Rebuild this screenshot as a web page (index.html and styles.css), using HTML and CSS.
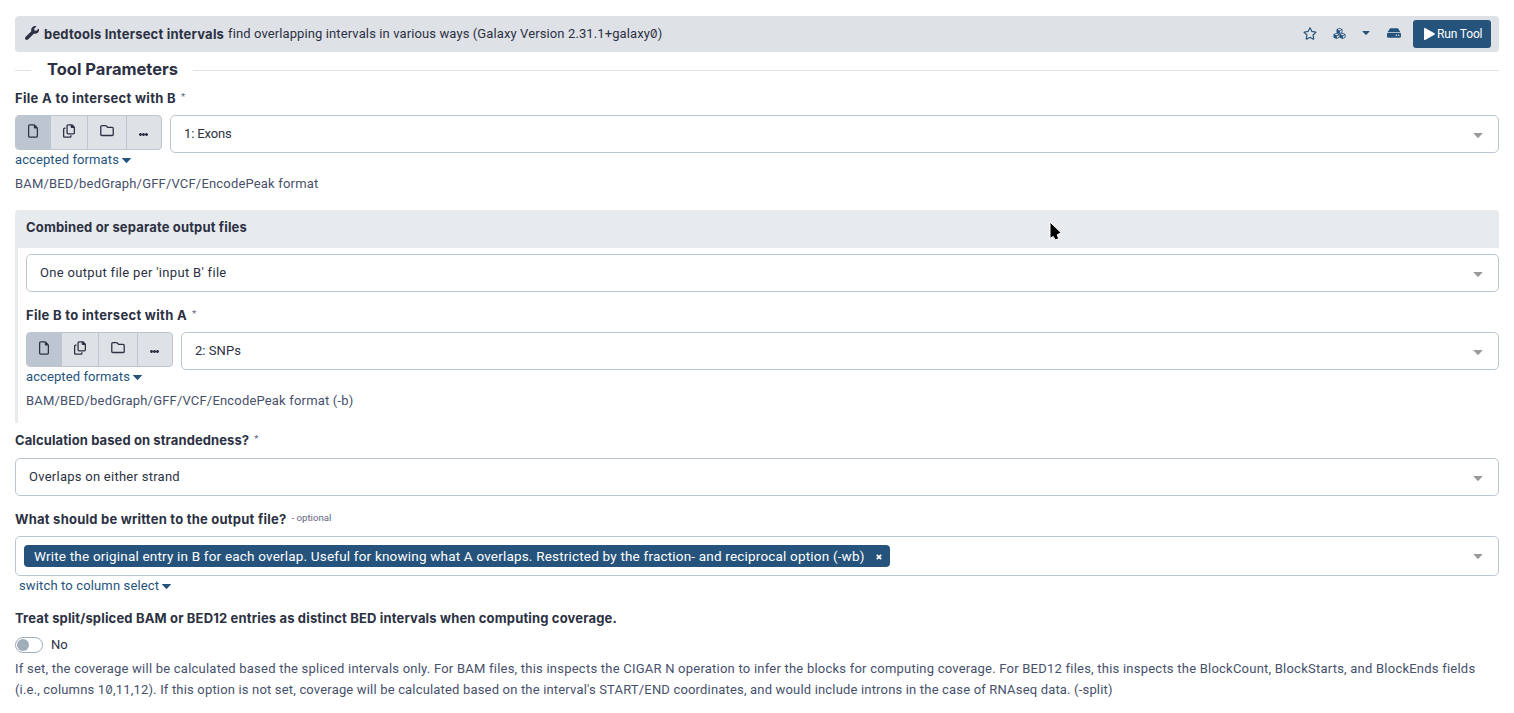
FILE: index.html
```html
<!DOCTYPE html>
<html lang="en">
<head>
<meta charset="utf-8">
<title>bedtools Intersect intervals</title>
<link rel="stylesheet" href="styles.css">
</head>
<body>
<svg class="defs" aria-hidden="true">
  <symbol id="file" viewBox="0 0 384 512"><path d="M320 464c8.800 0 16-7.200 16-16V160h-80c-17.700 0-32-14.300-32-32V48H64c-8.800 0-16 7.200-16 16v384c0 8.800 7.200 16 16 16h256zM0 64C0 28.700 28.700 0 64 0h165.500c17 0 33.300 6.700 45.300 18.700l90.500 90.500c12 12 18.700 28.300 18.700 45.300V448c0 35.300-28.700 64-64 64H64c-35.300 0-64-28.700-64-64z"/></symbol>
  <symbol id="copy" viewBox="0 0 448 512"><path d="M384 336H192c-8.800 0-16-7.200-16-16V64c0-8.800 7.200-16 16-16h96v64c0 17.700 14.300 32 32 32h80v176c0 8.800-7.200 16-16 16zM192 384h192c35.300 0 64-28.700 64-64V125c0-13-5-25-14-34l-77-77c-9-9-21-14-34-14H192c-35.300 0-64 28.700-64 64v256c0 35.300 28.700 64 64 64zM64 128c-35.300 0-64 28.700-64 64v256c0 35.300 28.700 64 64 64h192c35.300 0 64-28.700 64-64v-32h-48v32c0 8.800-7.200 16-16 16H64c-8.800 0-16-7.200-16-16V192c0-8.800 7.200-16 16-16h32v-48z"/></symbol>
  <symbol id="folder" viewBox="0 0 512 448"><path d="M0 64C0 28.700 28.700 0 64 0h132.100c19.100 0 37.400 7.600 50.900 21.100L289.900 64H448c35.300 0 64 28.700 64 64v224c0 35.300-28.700 64-64 64H64c-35.300 0-64-28.700-64-64zm64-16c-8.800 0-16 7.200-16 16v288c0 8.800 7.200 16 16 16h384c8.800 0 16-7.200 16-16V128c0-8.800-7.200-16-16-16H286.600c-10.600 0-20.800-4.200-28.300-11.700L213.100 55c-4.500-4.500-10.600-7-17-7z"/></symbol>
  <symbol id="caret" viewBox="0 0 9 5"><path d="M.3 0h8.400c.3 0 .4.300.2.500L4.900 4.800a.5.500 0 0 1-.8 0L.1.500C-.1.300 0 0 .3 0z"/></symbol>
</svg>
<main class="tool">
  <header class="tool-header">
    <svg class="wrench" viewBox="0 0 512 512"><path d="M507.700 109.100c-2.300-9-13.500-12-20.100-5.400l-74.300 74.300-67.900-11.300-11.300-67.900 74.300-74.300c6.600-6.600 3.500-17.800-5.500-20.200-47.400-11.700-99.600.9-136.600 37.900-39.600 39.600-50.600 97.100-34.100 147.200L18.700 402.800c-25 25-25 65.500 0 90.500s65.500 25 90.500 0l213.200-213.200c50.100 16.700 107.500 5.700 147.400-34.200 37.100-37.100 49.700-89.300 37.900-136.800z"/></svg>
    <h1 class="tool-title"><span class="t-title">bedtools Intersect intervals</span></h1>
    <span class="tool-desc t-desc">find overlapping intervals in various ways (Galaxy Version 2.31.1+galaxy<span class="zero">0</span>)</span>
    <div class="actions">
      <svg class="star" viewBox="0 0 576 512"><path d="M528.100 171.500L382 150.200 316.700 17.800c-11.700-23.600-45.600-23.900-57.400 0L194 150.200 47.900 171.500c-26.200 3.800-36.700 36.100-17.700 54.600l105.700 103-25 145.500c-4.500 26.300 23.200 46 46.400 33.700L288 439.600l130.700 68.700c23.200 12.200 50.900-7.400 46.400-33.700l-25-145.500 105.700-103c19-18.500 8.500-50.800-17.700-54.600zM388.600 312.300l23.700 138.400L288 385.400l-124.300 65.300 23.700-138.400-100.600-98 139-20.200 62.200-126 62.200 126 139 20.200z"/></svg>
      <svg class="cubes" viewBox="0 0 24 22"><g id="cube"><path fill-rule="evenodd" d="M12 0l5.300 2.100q.7.300.7 1v5.800q0 .7-.7 1L12 12 6.700 9.900q-.7-.3-.7-1V3.100q0-.7.700-1zM12 1.600L8 3.200l4 1.600 4-1.600zM12.800 6v4l3.700-1.600V4.500z"/></g><use href="#cube" x="-6" y="9.800"/><use href="#cube" x="6" y="9.800"/></svg>
      <svg class="menu-caret"><use href="#caret"/></svg>
      <svg class="drive" viewBox="0 0 576 384"><path d="M576 240v96c0 26.500-21.500 48-48 48H48c-26.500 0-48-21.500-48-48v-96c0-26.500 21.500-48 48-48h480c26.500 0 48 21.500 48 48zm-48-80c12.300 0 24 2.800 34.400 7.700L462.300 17.400C455.500 6.500 443 0 430 0H146c-13 0-25.500 6.500-32.300 17.400L13.600 167.700C24 162.800 35.700 160 48 160zm-48 96a32 32 0 1 0 0 64 32 32 0 0 0 0-64zm-96 0a32 32 0 1 0 0 64 32 32 0 0 0 0-64z"/></svg>
      <button class="run"><svg class="play" viewBox="0 0 11 12"><path d="M0 .7C0 .1.600-.2 1.100.1l9.300 5.200c.6.300.6 1.100 0 1.400L1.100 11.900c-.5.300-1.100 0-1.100-.6z"/></svg><span class="t-run">Run Tool</span></button>
    </div>
  </header>
  <h2 class="divider"><span class="t-head">Tool Parameters</span></h2>

  <div class="label"><b class="t-filea">File A to intersect with B</b><span class="mark">*</span></div>
  <div class="file-row">
    <div class="source">
      <div class="group">
        <button class="g-file active"><svg class="i-file"><use href="#file"/></svg></button>
        <button class="g-copy"><svg class="i-copy"><use href="#copy"/></svg></button>
        <button class="g-folder"><svg class="i-folder"><use href="#folder"/></svg></button>
        <button class="g-more"><i class="dots"></i></button>
      </div>
      <a class="link"><span class="t-accepted">accepted formats</span><svg class="link-caret"><use href="#caret"/></svg></a>
    </div>
    <div class="select"><span class="t-exons">1: Exons</span><svg class="arrow"><use href="#caret"/></svg></div>
  </div>
  <p class="help"><span class="t-bam">BAM/BED/bedGraph/GFF/VCF/EncodePeak format</span></p>

  <section class="portlet">
    <div class="portlet-header"><b class="t-combined">Combined or separate output files</b>
      <svg class="cursor" viewBox="0 0 13 20"><path d="M1 1v16.500l3.200-2 2.300 3.500 3.200-1.400-1.500-3.800 4-2z"/></svg>
    </div>
    <div class="portlet-body">
      <div class="select"><span class="t-one">One output file per 'input B' file</span><svg class="arrow"><use href="#caret"/></svg></div>
      <div class="label label-b"><b class="t-filea">File B to intersect with A</b><span class="mark">*</span></div>
      <div class="file-row">
        <div class="source">
          <div class="group">
            <button class="g-file active"><svg class="i-file"><use href="#file"/></svg></button>
            <button class="g-copy"><svg class="i-copy"><use href="#copy"/></svg></button>
            <button class="g-folder"><svg class="i-folder"><use href="#folder"/></svg></button>
            <button class="g-more"><i class="dots"></i></button>
          </div>
          <a class="link"><span class="t-accepted">accepted formats</span><svg class="link-caret"><use href="#caret"/></svg></a>
        </div>
        <div class="select"><span class="t-snps">2: SNPs</span><svg class="arrow"><use href="#caret"/></svg></div>
      </div>
      <p class="help"><span class="t-bam">BAM/BED/bedGraph/GFF/VCF/EncodePeak format (-b)</span></p>
    </div>
  </section>

  <div class="label label-calc"><b class="t-calc">Calculation based on strandedness?</b><span class="mark">*</span></div>
  <div class="select"><span class="t-overlaps">Overlaps on either strand</span><svg class="arrow"><use href="#caret"/></svg></div>

  <div class="label label-what"><b class="t-what">What should be written to the output file?</b><span class="optional">- optional</span></div>
  <div class="select multi">
    <span class="chip"><span class="t-chip">Write the original entry in B for each overlap. Useful for knowing what A overlaps. Restricted by the fraction- and reciprocal option (-wb)</span><svg class="remove" viewBox="0 0 6 6"><path d="M.8.8l4.400 4.400M5.200.8L.8 5.200"/></svg></span>
    <svg class="arrow"><use href="#caret"/></svg>
  </div>
  <a class="link link-switch"><span class="t-switch">switch to column select</span><svg class="link-caret"><use href="#caret"/></svg></a>

  <div class="label label-treat"><b class="t-treat">Treat split/spliced BAM or BED12 entries as distinct BED intervals when computing coverage.</b></div>
  <div class="switch-row"><span class="switch"></span><span>No</span></div>
  <p class="help long"><span class="t-long1">If set, the coverage will be calculated based the spliced intervals only. For BAM files, this inspects the CIGAR N operation to infer the blocks for computing coverage. For BED12 files, this inspects the BlockCount, BlockStarts, and BlockEnds fields</span><br><span class="t-long2">(i.e., columns 1<span class="zero">0</span>,11,12). If this option is not set, coverage will be calculated based on the interval's START/END coordinates, and would include introns in the case of RNAseq data. (-split)</span></p>
</main>
</body>
</html>
```
FILE: styles.css
```css
* { box-sizing: border-box; }
body {
  margin: 0;
  background: #fff;
  color: #2c3143;
  font-family: Roboto, sans-serif;
  font-size: 13px;
  line-height: 20px;
}
svg { display: block; fill: currentColor; flex: none; }
span, b { white-space: nowrap; }
h1, h2, b { font-family: Inter, sans-serif; font-weight: 700; }
button { font: inherit; color: inherit; border: 0; padding: 0; }
.defs { position: absolute; width: 0; height: 0; }
.zero { font-family: Inter, sans-serif; font-size: .92em; font-feature-settings: "zero"; }
.tool { padding: 16px 15px 0; }

.t-title { letter-spacing: .21px; }
.t-desc { letter-spacing: .11px; }
.t-filea { letter-spacing: .31px; }
.t-accepted { letter-spacing: .1px; }
.t-exons { letter-spacing: -.15px; }
.t-bam { letter-spacing: .18px; }
.t-combined { letter-spacing: .15px; }
.t-one { letter-spacing: .32px; }
.t-snps { letter-spacing: .05px; }
.t-calc { letter-spacing: .1px; }
.t-overlaps { letter-spacing: .26px; }
.t-what { letter-spacing: .23px; }
.t-chip { font-size: 13.5px; letter-spacing: .19px; margin-top: -1px; }
.t-switch { letter-spacing: .14px; }
.t-treat { letter-spacing: .16px; }
.t-long1 { letter-spacing: .228px; }
.t-long2 { letter-spacing: .175px; }
.t-run { font-size: 12px; letter-spacing: -.15px; }

.tool-header {
  display: flex;
  align-items: center;
  height: 36px;
  padding: 0 8px 0 10px;
  border-radius: 4px;
  background: #dee1e6;
}
.wrench { width: 14px; height: 14px; margin: -2px 5px 0 0; }
.tool-title { margin: 0; width: 184px; font-size: inherit; }
.actions { display: flex; align-items: center; margin-left: auto; color: #25537b; }
.star { width: 14px; height: 13px; margin: -2px 16px 0 0; }
.cubes { width: 13px; height: 11px; margin: -2px 16px 0 0; }
.menu-caret { width: 8px; height: 4px; margin: -2px 17px 0 0; }
.drive { width: 14px; height: 10px; margin: -2px 12px 0 0; }
.run {
  display: flex;
  align-items: center;
  width: 78px;
  height: 28px;
  padding-left: 11px;
  gap: 2px;
  border-radius: 3px;
  background: #25537b;
  color: #fff;
}
.play { width: 11px; height: 12px; }

.divider {
  display: flex;
  align-items: center;
  gap: 16px;
  height: 20px;
  margin: 8px 0;
  font-size: 16.5px;
}
.divider::before, .divider::after { content: ""; height: 1px; margin-top: 1px; background: #dee1e6; }
.divider::before { width: 16px; }
.divider::after { flex: 1; }
.divider span { width: 130px; margin-top: -2px; }

.label { display: flex; height: 20px; margin-bottom: 7px; }
.label-b { margin-top: 13px; }
.label-calc { margin: 7px 0 8px; }
.label-what { margin-top: 13px; }
.label-treat { margin: 12px 0 9px; }
.mark, .optional { font-size: 9.7px; line-height: 17px; color: #5f6684; margin-left: 5px; }

.file-row { display: flex; align-items: flex-start; gap: 8px; }
.source { width: 147px; }
.group {
  display: flex;
  height: 35px;
  border: 1px solid #bdc6d0;
  border-radius: 4px;
  background: #dee1e6;
  overflow: hidden;
}
.group button { display: flex; justify-content: center; height: 33px; padding-top: 8px; background: none; }
.group button + button { border-left: 1px solid #bdc6d0; }
.g-file { width: 34px; }
.g-copy { width: 37px; }
.g-folder { width: 39px; }
.g-more { flex: 1; }
.group .active { background: #bdc6d0; }
.i-file { width: 10px; height: 14px; }
.i-copy { width: 12px; height: 14px; }
.i-folder { width: 14px; height: 12px; margin-top: 1px; }
.dots {
  width: 9px;
  height: 3px;
  margin: 9px 2px 0 0;
  background: radial-gradient(circle, #2c3143 1.2px, transparent 1.6px) 0 0 / 3px 3px;
}
.link { display: flex; align-items: center; gap: 3px; height: 20px; color: #25537b; }
.link-caret { width: 9px; height: 5px; }
.link-switch { margin-left: 4px; }

.select {
  display: flex;
  align-items: center;
  justify-content: space-between;
  flex: 1;
  height: 38px;
  padding: 0 15px 0 13px;
  border: 1px solid #bdc6d0;
  border-radius: 5px;
}
.arrow { width: 10px; height: 5px; margin-top: 2px; color: #999; }
.multi { height: 40px; padding-left: 8px; }
.multi .arrow { margin-top: 1px; }
.chip {
  display: flex;
  align-items: center;
  justify-content: space-between;
  width: 866px;
  height: 22px;
  padding: 0 8px 0 10px;
  border-radius: 4px;
  background: #25537b;
  color: #fff;
}
.remove { width: 6px; height: 6px; margin-top: 2px; stroke: currentColor; stroke-width: 1.8; overflow: visible; }

.help { height: 20px; margin: 4px 0 0; color: #46506b; }
.long { height: auto; margin-top: 5px; line-height: 21px; }

.portlet { margin-top: 16px; }
.portlet-header {
  position: relative;
  height: 38px;
  padding: 7px 11px;
  border-radius: 4px 4px 0 0;
  background: #e8ebee;
}
.cursor { position: absolute; left: 1034px; top: 11px; width: 13px; height: 20px; fill: #000; stroke: #fff; stroke-width: 1; }
.portlet-body { padding: 6px 0 12px 8px; border-left: 3px solid #e8ebee; }

.switch-row { display: flex; align-items: center; gap: 8px; height: 16px; }
.switch { display: flex; align-items: center; width: 28px; height: 16px; padding-left: 1px; border: 1px solid #a0adba; border-radius: 8px; }
.switch::before { content: ""; width: 12px; height: 12px; border-radius: 50%; background: #a0adba; }
```
